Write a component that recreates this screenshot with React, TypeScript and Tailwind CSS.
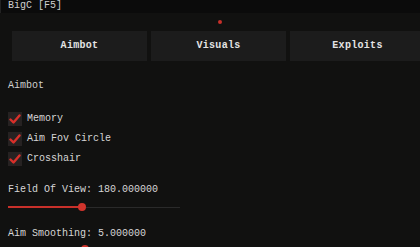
import React from "react";

const Check = () => (
  <div className="w-[14px] h-[14px] bg-[#262222] flex items-center justify-center">
    <svg width="12" height="12" viewBox="0 0 12 12">
      <path d="M1.5 6.5 L4.5 9.5 L10.5 2.5" stroke="#d8302a" strokeWidth="2.4" fill="none" strokeLinecap="round" strokeLinejoin="round" />
    </svg>
  </div>
);

const Slider = ({ pct }: { pct: number }) => (
  <div className="relative w-[172px] h-[8px] flex items-center">
    <div className="absolute left-0 right-0 h-[1px] bg-[#2a2a2a]" />
    <div className="absolute left-0 h-[2px] bg-[#c8302a]" style={{ width: `${pct}%` }} />
    <div className="absolute w-[8px] h-[8px] rounded-full bg-[#d0342c]" style={{ left: `calc(${pct}% - 4px)` }} />
  </div>
);

export default function App() {
  const mono = { fontFamily: '"Liberation Mono", "DejaVu Sans Mono", monospace' };
  return (
    <div className="w-[420px] h-[247px] bg-[#111110] overflow-hidden text-[#d6d6d6] text-[10px] leading-none" style={mono}>
      <div className="h-[16px] bg-[#0b0b0b] border-l border-[#222] flex items-start pl-[7px] -mt-[3px]">
        <span className="mt-[4px] text-[#cfcfcf]">BigC [F5]</span>
      </div>
      <div className="h-[18px] relative">
        <div className="absolute left-[218px] top-[7px] w-[4px] h-[4px] rounded-full bg-[#c8302a]" />
      </div>
      <div className="flex gap-[4px] pl-[12px]">
        {["Aimbot", "Visuals", "Exploits"].map((t) => (
          <div key={t} className="shrink-0 w-[135px] h-[30px] bg-[#1c1c1c] flex items-center justify-center font-bold text-[#e4e4e4] tracking-[0.3px]">
            {t}
          </div>
        ))}
      </div>
      <div className="pl-[8px] pt-[20px]">
        <div className="text-[#cfcfcf]">Aimbot</div>
        <div className="mt-[21px] flex flex-col gap-[6px]">
          {["Memory", "Aim Fov Circle", "Crosshair"].map((t) => (
            <div key={t} className="flex items-center gap-[5px]">
              <Check />
              <span>{t}</span>
            </div>
          ))}
        </div>
        <div className="mt-[19px]">Field Of View: 180.000000</div>
        <div className="mt-[8px]">
          <Slider pct={43} />
        </div>
        <div className="mt-[18px]">Aim Smoothing: 5.000000</div>
        <div className="mt-[6px]">
          <Slider pct={45} />
        </div>
      </div>
    </div>
  );
}
